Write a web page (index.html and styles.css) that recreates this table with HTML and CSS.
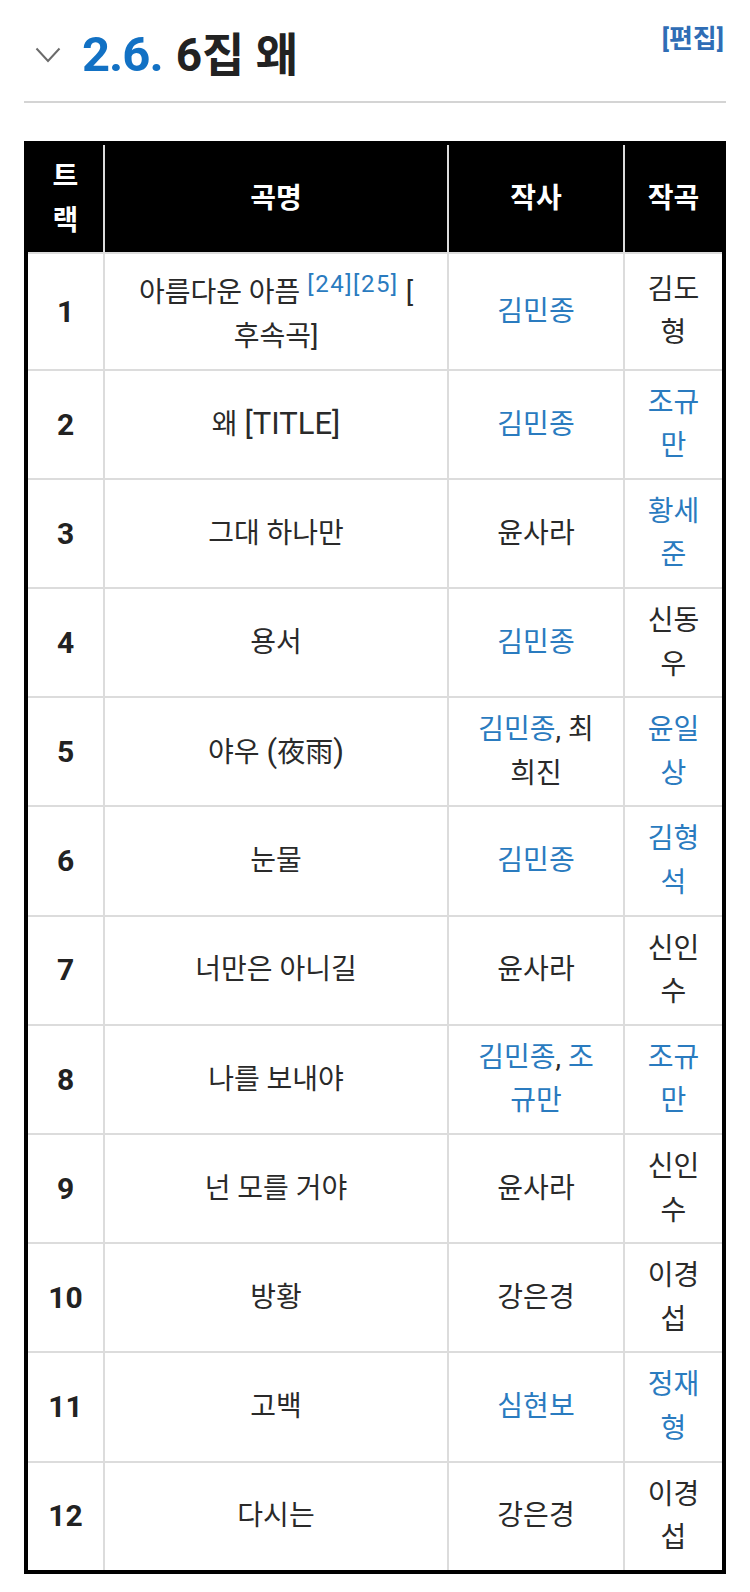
FILE: index.html
```html
<!DOCTYPE html>
<html lang="ko">
<head>
<meta charset="utf-8">
<title>2.6. 6집 왜</title>
<link rel="stylesheet" href="styles.css">
</head>
<body>
<div class="page">
  <div class="heading">
    <h2 class="title">
      <svg class="chev" width="26" height="16" viewBox="0 0 26 16" aria-hidden="true"><polyline points="1.5,1.5 13,14 24.5,1.5" fill="none" stroke="#6b6b6b" stroke-width="2"/></svg>
      <span class="num">2.6.</span>
      <span class="name">6집 왜</span>
    </h2>
    <a class="edit" href="#">[편집]</a>
  </div>

  <table class="tracks">
    <colgroup>
      <col class="c1"><col class="c2"><col class="c3"><col class="c4">
    </colgroup>
    <thead>
      <tr><th>트<br>랙</th><th>곡명</th><th>작사</th><th>작곡</th></tr>
    </thead>
    <tbody>
      <tr><td class="no">1</td><td>아름다운 아픔 <sup class="ref">[24][25]</sup> [<br>후속곡]</td><td><a href="#">김민종</a></td><td>김도<br>형</td></tr>
      <tr><td class="no">2</td><td>왜 <span class="lat">[TITLE]</span></td><td><a href="#">김민종</a></td><td><a href="#">조규<br>만</a></td></tr>
      <tr><td class="no">3</td><td>그대 하나만</td><td>윤사라</td><td><a href="#">황세<br>준</a></td></tr>
      <tr><td class="no">4</td><td>용서</td><td><a href="#">김민종</a></td><td>신동<br>우</td></tr>
      <tr><td class="no">5</td><td>야우 <span class="lat">(</span>夜雨<span class="lat">)</span></td><td><a href="#">김민종</a>, 최<br>희진</td><td><a href="#">윤일<br>상</a></td></tr>
      <tr><td class="no">6</td><td>눈물</td><td><a href="#">김민종</a></td><td><a href="#">김형<br>석</a></td></tr>
      <tr><td class="no">7</td><td>너만은 아니길</td><td>윤사라</td><td>신인<br>수</td></tr>
      <tr><td class="no">8</td><td>나를 보내야</td><td><a href="#">김민종</a>, <a href="#">조<br>규만</a></td><td><a href="#">조규<br>만</a></td></tr>
      <tr><td class="no">9</td><td>넌 모를 거야</td><td>윤사라</td><td>신인<br>수</td></tr>
      <tr><td class="no">10</td><td>방황</td><td>강은경</td><td>이경<br>섭</td></tr>
      <tr><td class="no">11</td><td>고백</td><td><a href="#">심현보</a></td><td><a href="#">정재<br>형</a></td></tr>
      <tr><td class="no">12</td><td>다시는</td><td>강은경</td><td>이경<br>섭</td></tr>
    </tbody>
  </table>
</div>
</body>
</html>
```

FILE: styles.css
```css
html, body {
  margin: 0;
  padding: 0;
  background: #fff;
}

body {
  font-family: Roboto, "Noto Sans CJK KR", sans-serif;
  color: #2a2a2a;
}

a {
  color: #2a7bbf;
  text-decoration: none;
}

.page {
  padding: 0 24px;
}

.heading {
  display: flex;
  justify-content: space-between;
  align-items: flex-start;
  height: 103px;
  border-bottom: 2px solid #d4d4d4;
  box-sizing: border-box;
}

.title {
  margin: 0;
  padding-top: 29px;
  display: flex;
  align-items: center;
  font-weight: bold;
  line-height: 52px;
  color: #222;
}

.chev {
  margin-left: 11px;
  margin-right: 21px;
  margin-top: -1px;
  flex: none;
}

.num {
  font-size: 49px;
  color: #1271c4;
  margin-right: 13px;
  letter-spacing: -1px;
}

.name {
  font-size: 46px;
  color: #222;
}

.edit {
  margin-top: 23px;
  margin-right: 2px;
  font-size: 26px;
  font-weight: bold;
  line-height: 32px;
  color: #2f6db5;
}

.tracks {
  margin-top: 38px;
  width: 702px;
  border: 4px solid #000;
  border-spacing: 0;
  table-layout: fixed;
  box-sizing: border-box;
}

.c1 { width: 77px; }
.c2 { width: 344px; }
.c3 { width: 176px; }
.c4 { width: 97px; }

.tracks th,
.tracks td {
  padding: 10px 10px;
  border-right: 2px solid #dcdcdc;
  border-bottom: 2px solid #dcdcdc;
  text-align: center;
  vertical-align: middle;
  font-size: 28px;
  line-height: 43.6px;
}

.tracks th:last-child,
.tracks td:last-child {
  border-right: none;
}

.tracks tbody tr:last-child td {
  border-bottom: none;
}

.tracks th {
  background: #000;
  color: #fff;
  font-weight: bold;
}

.tracks td.no {
  font-weight: bold;
  font-size: 30px;
  color: #222;
}

.lat {
  font-size: 31px;
}

.ref {
  font-size: 24px;
  line-height: 40px;
  color: #2a7bbf;
  letter-spacing: 1.5px;
}
```
